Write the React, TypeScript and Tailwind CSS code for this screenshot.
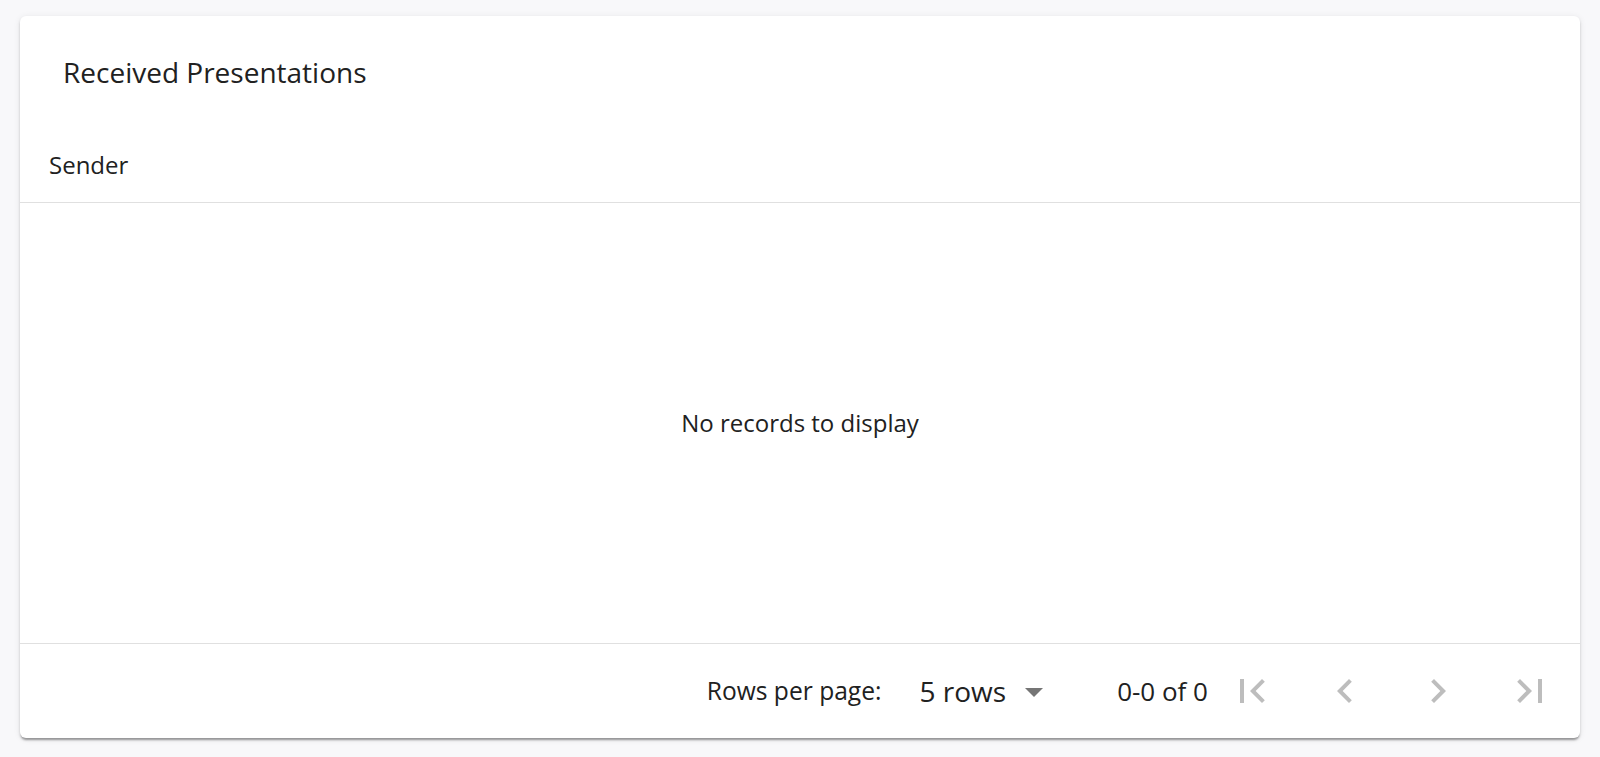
import React from "react";

const Icon = ({ d }: { d: string }) => (
  <svg width="48" height="48" viewBox="0 0 24 24" className="shrink-0" fill="#bdbdbd">
    <path d={d} />
  </svg>
);

export default function App() {
  return (
    <div
      className="min-h-[757px] w-full bg-[#f8f8fa] pt-[16px] pb-[19px] px-[20px] text-[#212121]"
      style={{ fontFamily: '"Open Sans", "Noto Sans", sans-serif' }}
    >
      <div className="bg-white rounded-[6px] shadow-[0_3px_2px_-1px_rgba(0,0,0,0.28),0_2px_3px_0_rgba(0,0,0,0.14),0_1px_7px_0_rgba(0,0,0,0.08)] h-[722px] flex flex-col">
        <div className="h-[112px] flex items-center pl-[43px] shrink-0">
          <h2 className="text-[28px] leading-[38px] font-normal">Received Presentations</h2>
        </div>
        <div className="h-[75px] flex items-center pl-[29px] border-b border-[#e0e0e0] shrink-0">
          <span className="text-[24px] leading-[32px]">Sender</span>
        </div>
        <div className="h-[441px] flex items-center justify-center border-b border-[#e0e0e0] shrink-0">
          <span className="text-[24px] leading-[32px]">No records to display</span>
        </div>
        <div className="flex-1 flex items-center justify-end pr-[26px]">
          <span className="text-[24.6px] leading-[34px]">Rows per page:</span>
          <span className="ml-[38px] text-[28px] leading-[38px]">5 rows</span>
          <svg width="18" height="9" viewBox="0 0 18 9" className="ml-[19px] mt-[2px] shrink-0">
            <polygon points="0,0 18,0 9,9" fill="#757575" />
          </svg>
          <span className="ml-[74px] text-[26px] leading-[34px]">0-0 of 0</span>
          <div className="ml-[20px]">
            <Icon d="M18.41 16.59L13.82 12l4.59-4.59L17 6l-6 6 6 6zM6 6h2v12H6z" />
          </div>
          <div className="ml-[45px]">
            <Icon d="M15.41 7.41L14 6l-6 6 6 6 1.41-1.41L10.83 12z" />
          </div>
          <div className="ml-[45px]">
            <Icon d="M10 6L8.59 7.41 13.17 12l-4.58 4.59L10 18l6-6z" />
          </div>
          <div className="ml-[44px]">
            <Icon d="M5.59 7.41L10.18 12l-4.59 4.59L7 18l6-6-6-6zM16 6h2v12h-2z" />
          </div>
        </div>
      </div>
    </div>
  );
}
